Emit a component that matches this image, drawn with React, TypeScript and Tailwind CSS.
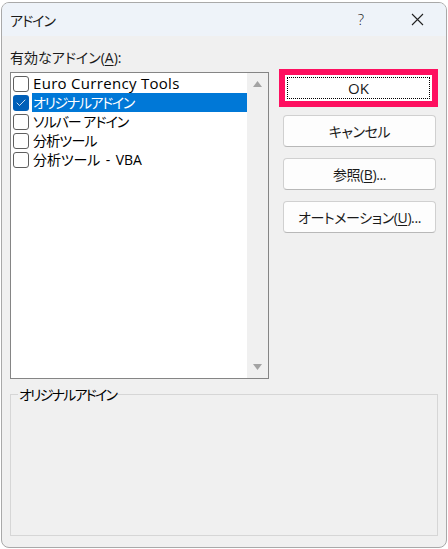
import { Check } from "lucide-react";

const FONT = "font-['Open_Sans','Noto_Sans_CJK_JP',sans-serif] [font-feature-settings:'palt']";

const ITEMS = [
  { label: "Euro Currency Tools", checked: false, fit: "text-[15px] tracking-[0.3px]" },
  { label: "オリジナルアドイン", checked: true, fit: "text-[14px] tracking-[-1.4px]" },
  { label: "ソルバー アドイン", checked: false, fit: "text-[14px] tracking-[-1px]" },
  { label: "分析ツール", checked: false, fit: "text-[14px] tracking-[-0.8px]" },
  { label: "分析ツール - VBA", checked: false, fit: "text-[14px] tracking-[-0.1px] [word-spacing:2px]" },
];

function Checkbox({ checked }: { checked: boolean }) {
  return checked ? (
    <span className="flex h-[16px] w-[16px] flex-shrink-0 items-center justify-center rounded-[3px] bg-[#005fb8]">
      <Check size={12} strokeWidth={1.6} className="text-white" />
    </span>
  ) : (
    <span className="h-[16px] w-[16px] flex-shrink-0 rounded-[3px] border border-[#5f5f5f] bg-white" />
  );
}

function DialogButton({ children }: { children: React.ReactNode }) {
  return (
    <button className="flex h-[32px] w-[153px] items-center justify-center rounded-[4px] border border-[#d0d0d0] border-b-[#b8b8b8] bg-[#fdfdfd] text-[14px] tracking-[-0.4px] text-[#1a1a1a]">
      {children}
    </button>
  );
}

export default function App() {
  return (
    <div className={`h-[549px] w-[448px] bg-white pt-[2px] pl-[1px] pr-[1px] ${FONT}`}>
      <div className="flex h-[546px] flex-col overflow-hidden rounded-lg border border-[#a9a9a9] bg-[#f0f0f0]">
        {/* title bar */}
        <div className="flex h-[33px] flex-shrink-0 items-center bg-[#eef3f9] pl-[8px] text-[14px] text-[#1a1a1a]">
          <span className="flex-1 pt-[1px] tracking-[-1px]">アドイン</span>
          <span className="w-[16px] text-center text-[15px] font-light">?</span>
          <span className="ml-[36px] mr-[17px] flex w-[24px] items-center justify-center">
            <svg width="13" height="13" viewBox="0 0 13 13">
              <path d="M1 1 L12 12 M12 1 L1 12" stroke="#222" strokeWidth="1.1" />
            </svg>
          </span>
        </div>

        <div className="flex flex-1 flex-col px-[8px]">
          <p className="mt-[13px] h-[18px] text-[14px] leading-[18px] tracking-[0px] text-[#1a1a1a]">
            有効なアドイン(<span className="underline underline-offset-2">A</span>):
          </p>

          <div className="mt-[5px] flex">
            {/* list box */}
            <div className="flex h-[307px] w-[260px] border border-[#858585] bg-white">
              <div className="flex flex-1 flex-col pt-[1px]">
                {ITEMS.map((item) => (
                  <div key={item.label} className="flex h-[19px] items-center pl-[2px]">
                    <Checkbox checked={item.checked} />
                    <span
                      className={`ml-[3px] flex h-[19px] flex-1 items-center pl-[1px] ${item.fit} ${
                        item.checked ? "bg-[#0078d7] text-white" : "text-black"
                      }`}
                    >
                      {item.label}
                    </span>
                  </div>
                ))}
              </div>
              <div className="flex w-[21px] flex-col items-center justify-between bg-[#f0f0f0] py-[8px]">
                <svg width="9" height="6" viewBox="0 0 9 6">
                  <path d="M4.5 0 L9 6 L0 6 Z" fill="#a3a3a3" />
                </svg>
                <svg width="9" height="6" viewBox="0 0 9 6">
                  <path d="M0 0 L9 0 L4.5 6 Z" fill="#a3a3a3" />
                </svg>
              </div>
            </div>

            {/* buttons */}
            <div className="ml-[10px] flex flex-col items-start">
              <div className="-mt-[3px] h-[38px] w-[159px] border-[6px] border-[#fe1060] bg-white p-[2px]">
                <div className="flex h-full w-full items-center justify-center border border-dotted border-black text-[15px] text-[#1a1a1a]">
                  OK
                </div>
              </div>
              <div className="ml-[4px] mt-[8px] flex flex-col gap-[11px]">
                <DialogButton>キャンセル</DialogButton>
                <DialogButton>
                  参照(<span className="underline underline-offset-2">B</span>)...
                </DialogButton>
                <DialogButton>
                  オートメーション(<span className="underline underline-offset-2">U</span>)...
                </DialogButton>
              </div>
            </div>
          </div>

          {/* group box */}
          <div className="relative mt-[15px] h-[142px] w-[428px] border border-[#d6d6d6]">
            <span className="absolute -top-[11px] left-[7px] bg-[#f0f0f0] px-[1px] text-[14px] tracking-[-1.8px] text-black">
              オリジナルアドイン
            </span>
          </div>
        </div>
      </div>
    </div>
  );
}
